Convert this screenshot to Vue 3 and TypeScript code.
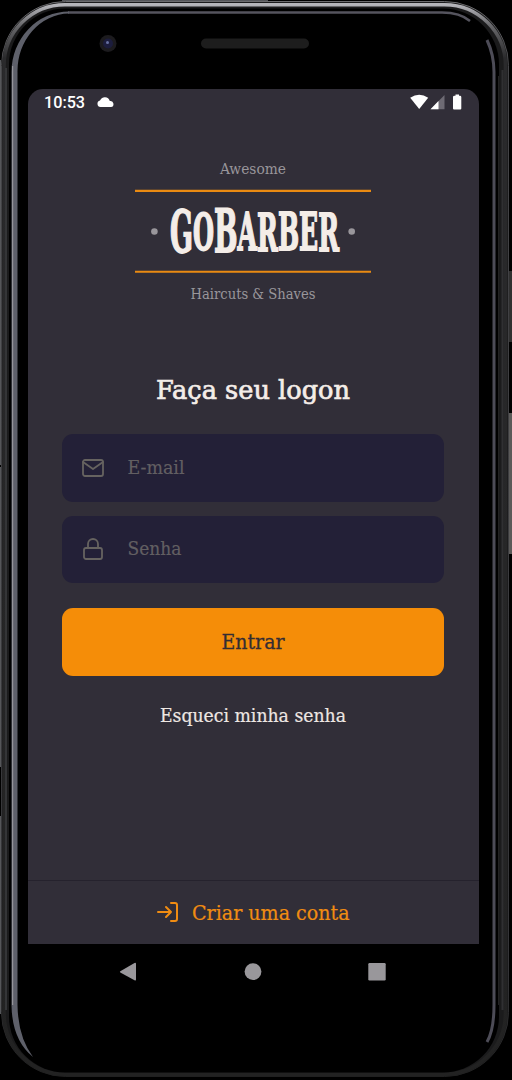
<script setup lang="ts">
interface Glyph {
  char: string
  drop: number
  size: number
}

const wordmark: Glyph[] = [
  { char: 'G', drop: 0, size: 57 },
  { char: 'O', drop: -2, size: 51 },
  { char: 'B', drop: 2, size: 59 },
  { char: 'A', drop: -2, size: 53 },
  { char: 'R', drop: 1, size: 53 },
  { char: 'B', drop: -1, size: 53 },
  { char: 'E', drop: 0, size: 53 },
  { char: 'R', drop: 1, size: 53 },
]
</script>

<template>
  <main class="phone">
    <svg class="frame" width="512" height="1080" viewBox="0 0 512 1080" aria-hidden="true">
      <defs>
        <linearGradient id="outer" x1="0" y1="0" x2="0" y2="1">
          <stop offset="0" stop-color="#6b6b6e" />
          <stop offset="0.06" stop-color="#454548" />
          <stop offset="0.9" stop-color="#343437" />
          <stop offset="1" stop-color="#202020" />
        </linearGradient>
        <linearGradient id="shine" x1="0" y1="0" x2="0" y2="1">
          <stop offset="0" stop-color="#b5b5ba" />
          <stop offset="0.02" stop-color="#67676a" />
          <stop offset="0.05" stop-color="#2a2a2c" />
          <stop offset="1" stop-color="#222" />
        </linearGradient>
      </defs>
      <path d="M0.5 60V465M0.5 467V767M0.5 816V1014" stroke="#555659" />
      <path d="M62 0.5H268" stroke="#55565a" />
      <path d="M510.5 271V342" stroke="#303030" stroke-width="3" />
      <path d="M510.5 413V554" stroke="#5b5a59" stroke-width="3" />
      <rect x="1.5" y="1.5" width="507" height="1075" rx="64" fill="#1b1b1c" stroke="url(#outer)" stroke-width="1" />
      <rect x="4" y="4.7" width="501.5" height="1069.5" rx="61" fill="none" stroke="url(#shine)" stroke-width="3.6" />
      <rect x="9" y="8.5" width="490" height="1064" rx="56" fill="#000" />
      <path d="M68 12.5H442Q460 12.5 470 21" fill="none" stroke="#55545e" stroke-width="2.5" />
      <path d="M11.5 72V1005Q12 1040 33 1057Q18 1037 17.5 1005V72A52 57.5 0 0 1 69 13.5V11.5A57.5 60.5 0 0 0 11.5 72Z" fill="#5e606a" />
      <path d="M12.6 66V1005" stroke="#94949a" stroke-width="1.2" />
      <path d="M487 40Q494 55 494 72V1005Q494 1030 487 1042" fill="none" stroke="#4d4c57" stroke-width="3" />
      <path d="M498.5 76V1005" stroke="#222" stroke-width="1" />
      <path d="M502.5 70V1010" stroke="#303032" stroke-width="2" />
      <path d="M6 68V1010" stroke="#343537" stroke-width="2" />
      <circle cx="108" cy="43.5" r="8.5" fill="#1c1b1e" />
      <circle cx="108" cy="43.5" r="5" fill="#1c1d3d" />
      <circle cx="107.5" cy="42.5" r="1.5" fill="#6670a0" />
      <rect x="201" y="38.5" width="108" height="10" rx="5" fill="#1d1d1d" />
    </svg>

    <section class="screen">
      <header class="status">
        <span class="clock">10:53</span>
        <svg class="cloud" width="17" height="10" viewBox="0 0 17 10">
          <path d="M3.5 10A3.3 3.3 0 0 1 3 3.5Q5 0 8 .2Q11.8.4 12.8 4A3 3 0 0 1 14 10Z" fill="#fff" />
        </svg>
        <svg class="signals" width="54" height="16" viewBox="0 0 54 16">
          <path d="M0.2 3.8Q9.2-2.5 18.2 3.8L9.2 15Z" fill="#fff" />
          <path d="M34.5 1V15.3H20.5Z" fill="#6e6b74" />
          <path d="M28.5 7V15.3H20.5Z" fill="#fff" />
          <path d="M43 3Q43 1.8 44.5 1.8H45.5V0.5H49V1.8H50Q51.3 1.8 51.3 3V14.5Q51.3 15.5 50.3 15.5H44Q43 15.5 43 14.5Z" fill="#fff" />
        </svg>
      </header>

      <div class="logo">
        <svg width="236" height="20" viewBox="0 0 236 20">
          <text class="tagline" x="85" y="15" textLength="66" lengthAdjust="spacingAndGlyphs">Awesome</text>
        </svg>
        <svg class="brand" width="236" height="84" viewBox="0 0 236 84">
          <path d="M0 1.9H236M0 82.7H236" stroke="#e98a12" stroke-width="2.1" />
          <circle cx="19.4" cy="42.5" r="3.3" fill="#99969b" />
          <circle cx="216.7" cy="42.5" r="3.3" fill="#99969b" />
          <text class="letters" x="35" y="63" textLength="169" lengthAdjust="spacingAndGlyphs"><tspan
            v-for="(glyph, index) in wordmark"
            :key="index"
            :dy="glyph.drop"
            :font-size="glyph.size"
          >{{ glyph.char }}</tspan></text>
        </svg>
        <svg width="236" height="28" viewBox="0 0 236 28">
          <text class="tagline" x="55.5" y="25.8" textLength="125" lengthAdjust="spacingAndGlyphs">Haircuts &amp; Shaves</text>
        </svg>
      </div>

      <h1 class="title">
        <svg width="210" height="40" viewBox="0 0 210 40">
          <text class="slab heading" x="8" y="27" textLength="194" lengthAdjust="spacingAndGlyphs">Faça seu logon</text>
        </svg>
      </h1>

      <form class="form" @submit.prevent>
        <label class="field">
          <svg class="icon" width="24" height="24" viewBox="0 0 24 24">
            <rect x="2" y="4" width="20" height="16" rx="2" />
            <path d="M22 6L12 13L2 6" />
          </svg>
          <svg width="90" height="30" viewBox="0 0 90 30">
            <text class="slab placeholder" x="0.5" y="21" textLength="57" lengthAdjust="spacingAndGlyphs">E-mail</text>
          </svg>
        </label>
        <label class="field">
          <svg class="icon" width="24" height="24" viewBox="0 0 24 24">
            <rect x="3" y="11" width="18" height="11" rx="2" />
            <path d="M7 11V7A5 5 0 0 1 17 7V11" />
          </svg>
          <svg width="90" height="30" viewBox="0 0 90 30">
            <text class="slab placeholder" x="0.5" y="21" textLength="54" lengthAdjust="spacingAndGlyphs">Senha</text>
          </svg>
        </label>
        <button class="submit" type="submit">
          <svg width="80" height="34" viewBox="0 0 80 34">
            <text class="slab enter" x="8.5" y="24" textLength="63" lengthAdjust="spacingAndGlyphs">Entrar</text>
          </svg>
        </button>
      </form>

      <a class="forgot">
        <svg width="200" height="30" viewBox="0 0 200 30">
          <text class="slab link" x="7" y="21" textLength="186" lengthAdjust="spacingAndGlyphs">Esqueci minha senha</text>
        </svg>
      </a>

      <a class="register">
        <svg class="login" width="24" height="24" viewBox="0 0 24 24">
          <path d="M15 3H19A2 2 0 0 1 21 5V19A2 2 0 0 1 19 21H15M10 17L15 12L10 7M15 12H2" />
        </svg>
        <svg width="163" height="32" viewBox="0 0 163 32">
          <text class="slab create" x="3" y="23.5" textLength="157.5" lengthAdjust="spacingAndGlyphs">Criar uma conta</text>
        </svg>
      </a>
    </section>

    <nav class="system-nav">
      <svg width="18" height="20" viewBox="0 0 18 20"><path d="M1.3 9.2L15.5 1Q17 .3 17 2V17.5Q17 19 15.5 18.2L1.3 10.4Q.5 9.8 1.3 9.2Z" /></svg>
      <svg width="18" height="20" viewBox="0 0 18 20"><circle cx="9" cy="9.6" r="8.4" /></svg>
      <svg width="18" height="20" viewBox="0 0 18 20"><rect x=".3" y="1" width="17.4" height="17.4" rx="1.2" /></svg>
    </nav>
  </main>
</template>

<style>
body {
  margin: 0;
  background: #000;
}
</style>

<style scoped>
.phone {
  position: relative;
  box-sizing: border-box;
  width: 512px;
  height: 1080px;
  padding: 89px 33px 0 28px;
  overflow: hidden;
  background: #000;
}

svg {
  display: block;
  flex: none;
}

.frame {
  position: absolute;
  top: 0;
  left: 0;
}

.screen {
  position: relative;
  display: flex;
  flex-direction: column;
  align-items: center;
  box-sizing: border-box;
  height: 855px;
  padding-right: 1px;
  border-radius: 15px 15px 0 0;
  background: #312e38;
}

.status {
  display: flex;
  box-sizing: border-box;
  width: 100%;
  height: 28px;
  padding: 5px 14px 0 16px;
}

.clock {
  width: 53px;
  font: 500 16.2px/18px Roboto, sans-serif;
  color: #fff;
}

.cloud {
  margin-top: 3px;
}

.signals {
  margin-left: auto;
}

.logo {
  display: flex;
  flex-direction: column;
  margin: 42px 1px 0 0;
}

.brand {
  margin-top: 10px;
}

.tagline {
  font: 14px "Roboto Slab", "DejaVu Serif", serif;
  fill: #99969b;
}

.letters {
  font-family: "DejaVu Serif", serif;
  font-weight: 700;
  fill: #f4ede8;
  stroke: #f4ede8;
  stroke-width: 1.8px;
}

.title {
  margin: 71px 0 0;
}

.slab {
  font-family: "Roboto Slab", "DejaVu Serif", serif;
}

.heading {
  font-size: 26px;
  font-weight: 400;
  fill: #f4ede8;
  stroke: #f4ede8;
  stroke-width: 0.7px;
}

.form {
  display: flex;
  flex-direction: column;
  gap: 14px;
  width: 382px;
  margin: 22px 0 0;
}

.field {
  display: flex;
  align-items: center;
  gap: 22px;
  box-sizing: border-box;
  height: 67.5px;
  padding-left: 19px;
  border-radius: 11px;
  background: #232037;
}

.icon {
  fill: none;
  stroke: #666360;
  stroke-width: 1.8;
  stroke-linecap: round;
  stroke-linejoin: round;
}

.placeholder {
  font-size: 18.5px;
  fill: #625f62;
  stroke: #625f62;
  stroke-width: 0.2px;
}

.submit {
  display: flex;
  align-items: center;
  justify-content: center;
  height: 68px;
  margin-top: 10.5px;
  padding: 0;
  border: 0;
  border-radius: 11px;
  background: #f58d08;
}

.enter {
  font-size: 20px;
  fill: #352d33;
  stroke: #352d33;
  stroke-width: 0.3px;
}

.forgot {
  margin-top: 25px;
}

.link {
  font-size: 18px;
  fill: #eee7e3;
  stroke: #eee7e3;
  stroke-width: 0.2px;
}

.register {
  display: flex;
  align-items: center;
  justify-content: center;
  gap: 9px;
  box-sizing: border-box;
  width: 451px;
  height: 64px;
  margin: auto -1px 0 0;
  padding: 0 0 2px;
  border-top: 1px solid #25222d;
}

.login {
  fill: none;
  stroke: #f08c12;
  stroke-width: 2;
  stroke-linecap: round;
  stroke-linejoin: round;
}

.create {
  font-size: 20.5px;
  fill: #f08c12;
  stroke: #f08c12;
  stroke-width: 0.2px;
}

.system-nav {
  position: relative;
  display: flex;
  justify-content: space-between;
  padding: 18px 93px 0 91px;
  fill: #99979b;
}
</style>
